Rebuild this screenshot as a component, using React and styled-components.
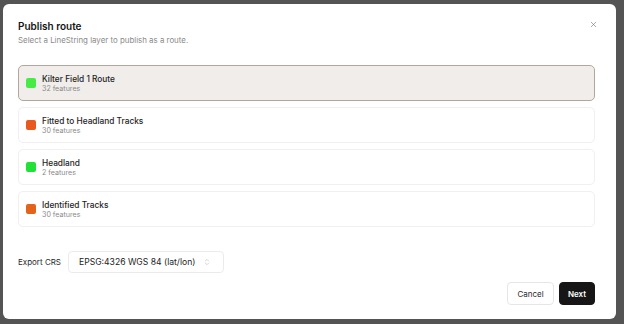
import React from "react";
import styled, { createGlobalStyle } from "styled-components";
import { ChevronsUpDown, X } from "lucide-react";

const Global = createGlobalStyle`
  html, body { margin: 0; padding: 0; background: #545454; }
  body { font-family: Inter, "Noto Sans", "Liberation Sans", sans-serif; -webkit-font-smoothing: antialiased; }
  * { box-sizing: border-box; }
`;

const Backdrop = styled.div`
  width: 624px;
  height: 324px;
  overflow: hidden;
  background: #545454;
  padding: 4px 8px 5px 3px;
`;

const Modal = styled.div`
  position: relative;
  width: 613px;
  height: 315px;
  background: #ffffff;
  border-radius: 6px;
  padding: 16px 21px 14px 15px;
  display: flex;
  flex-direction: column;
`;

const CloseButton = styled.button`
  position: absolute;
  top: 15px;
  right: 18px;
  width: 10px;
  height: 10px;
  padding: 0;
  border: none;
  background: transparent;
  color: #707070;
  display: flex;
  align-items: center;
  justify-content: center;
`;

const Title = styled.h2`
  margin: 0;
  font-size: 10px;
  line-height: 12px;
  font-weight: 600;
  color: #141414;
`;

const Subtitle = styled.p`
  margin: 3px 0 0;
  font-size: 7.9px;
  line-height: 10px;
  color: #8a8a8a;
`;

const List = styled.div`
  margin-top: 20px;
  display: flex;
  flex-direction: column;
  gap: 6px;
`;

const Row = styled.div`
  height: 36px;
  display: flex;
  align-items: center;
  gap: 6px;
  padding: 0 7px;
  border-radius: 5px;
  border: 1px solid ${(p) => (p.$selected ? "#b3a79b" : "#f0f0f0")};
  background: ${(p) => (p.$selected ? "#f1edea" : "#ffffff")};
`;

const Swatch = styled.span`
  width: 10px;
  height: 10px;
  border-radius: 2px;
  background: ${(p) => p.$color};
  flex: none;
`;

const Info = styled.div`
  display: flex;
  flex-direction: column;
  padding-top: 1px;
`;

const Name = styled.div`
  font-size: 8.3px;
  line-height: 10px;
  font-weight: 500;
  color: #1e1e1e;
`;

const Count = styled.div`
  font-size: 7.1px;
  line-height: 10px;
  color: #8a8a8a;
`;

const CrsRow = styled.div`
  margin-top: 24px;
  display: flex;
  align-items: center;
  gap: 7px;
`;

const Label = styled.span`
  font-size: 8px;
  color: #2a2a2a;
`;

const Select = styled.div`
  width: 156px;
  height: 22px;
  border: 1px solid #ebebeb;
  border-radius: 4px;
  display: flex;
  align-items: center;
  justify-content: space-between;
  padding: 0 12px 0 10px;
  font-size: 8.6px;
  color: #222;
`;

const Footer = styled.div`
  margin-top: 9px;
  display: flex;
  justify-content: flex-end;
  gap: 5px;
`;

const Button = styled.button`
  height: 23px;
  width: ${(p) => p.$w}px;
  border-radius: 4px;
  font-family: inherit;
  font-size: 8px;
  padding: 0;
  border: 1px solid ${(p) => (p.$primary ? "#161616" : "#e6e6e6")};
  background: ${(p) => (p.$primary ? "#161616" : "#ffffff")};
  color: ${(p) => (p.$primary ? "#ffffff" : "#2a2a2a")};
  font-weight: ${(p) => (p.$primary ? 600 : 400)};
`;

const layers = [
  { name: "Kilter Field 1 Route", count: "32 features", color: "#48ea45", selected: true },
  { name: "Fitted to Headland Tracks", count: "30 features", color: "#e8581f" },
  { name: "Headland", count: "2 features", color: "#20e236" },
  { name: "Identified Tracks", count: "30 features", color: "#e2641b" },
];

export default function App() {
  return (
    <>
      <Global />
      <Backdrop>
        <Modal>
          <CloseButton aria-label="Close">
            <X size={9} strokeWidth={1.6} />
          </CloseButton>
          <Title>Publish route</Title>
          <Subtitle>Select a LineString layer to publish as a route.</Subtitle>
          <List>
            {layers.map((l) => (
              <Row key={l.name} $selected={l.selected}>
                <Swatch $color={l.color} />
                <Info>
                  <Name>{l.name}</Name>
                  <Count>{l.count}</Count>
                </Info>
              </Row>
            ))}
          </List>
          <CrsRow>
            <Label>Export CRS</Label>
            <Select>
              <span>EPSG:4326 WGS 84 (lat/lon)</span>
              <ChevronsUpDown size={8} color="#a8a8a8" strokeWidth={1.5} />
            </Select>
          </CrsRow>
          <Footer>
            <Button $w={47}>Cancel</Button>
            <Button $w={36} $primary>Next</Button>
          </Footer>
        </Modal>
      </Backdrop>
    </>
  );
}
